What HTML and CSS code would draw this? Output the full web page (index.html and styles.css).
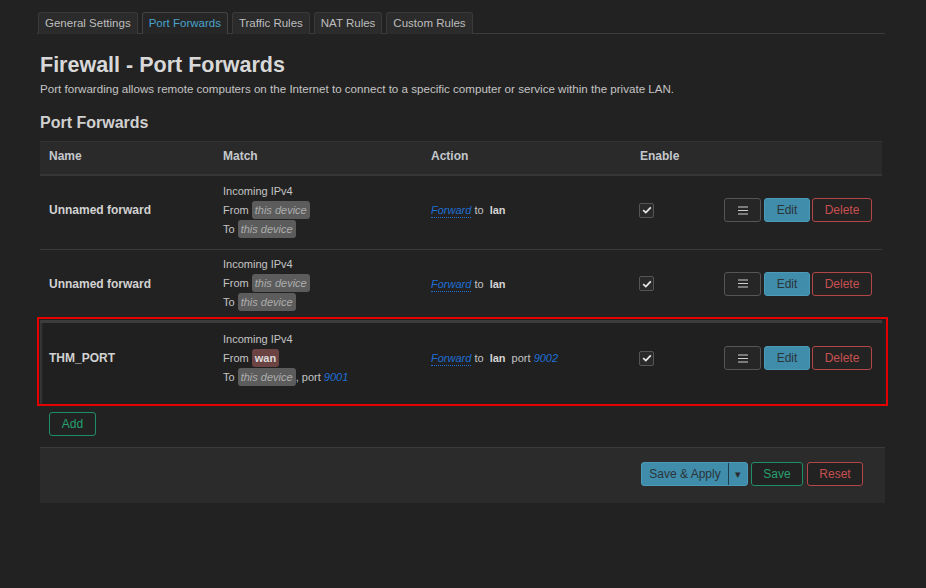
FILE: index.html
```html
<!DOCTYPE html>
<html>
<head>
<meta charset="utf-8">
<link rel="stylesheet" href="styles.css">
</head>
<body>
<div class="page">
  <ul class="tabs">
    <li class="tab">General Settings</li>
    <li class="tab active">Port Forwards</li>
    <li class="tab">Traffic Rules</li>
    <li class="tab">NAT Rules</li>
    <li class="tab">Custom Rules</li>
  </ul>

  <h2 class="title">Firewall - Port Forwards</h2>
  <p class="desc">Port forwarding allows remote computers on the Internet to connect to a specific computer or service within the private LAN.</p>

  <h3 class="section">Port Forwards</h3>

  <div class="table">
    <div class="row head">
      <div class="cell">Name</div>
      <div class="cell">Match</div>
      <div class="cell">Action</div>
      <div class="cell">Enable</div>
      <div class="cell"></div>
    </div>

    <div class="row first">
      <div class="cell name">Unnamed forward</div>
      <div class="cell match">
        <div>Incoming IPv4</div>
        <div>From <span class="badge">this device</span></div>
        <div>To <span class="badge">this device</span></div>
      </div>
      <div class="cell action"><span class="link">Forward</span> to <b>lan</b></div>
      <div class="cell"><span class="check"><svg width="10" height="8" viewBox="0 0 10 8"><path d="M1.2 4.2 L3.8 6.6 L8.8 1.4" fill="none" stroke="#e8e8e8" stroke-width="1.8"/></svg></span></div>
      <div class="cell btns">
        <span class="btn menu"><svg width="10" height="9" viewBox="0 0 10 9"><path d="M0 1h10M0 4.5h10M0 8h10" stroke="#cfcfcf" stroke-width="1.2"/></svg></span>
        <span class="btn edit">Edit</span>
        <span class="btn del">Delete</span>
      </div>
    </div>

    <div class="row second">
      <div class="cell name">Unnamed forward</div>
      <div class="cell match">
        <div>Incoming IPv4</div>
        <div>From <span class="badge">this device</span></div>
        <div>To <span class="badge">this device</span></div>
      </div>
      <div class="cell action"><span class="link">Forward</span> to <b>lan</b></div>
      <div class="cell"><span class="check"><svg width="10" height="8" viewBox="0 0 10 8"><path d="M1.2 4.2 L3.8 6.6 L8.8 1.4" fill="none" stroke="#e8e8e8" stroke-width="1.8"/></svg></span></div>
      <div class="cell btns">
        <span class="btn menu"><svg width="10" height="9" viewBox="0 0 10 9"><path d="M0 1h10M0 4.5h10M0 8h10" stroke="#cfcfcf" stroke-width="1.2"/></svg></span>
        <span class="btn edit">Edit</span>
        <span class="btn del">Delete</span>
      </div>
    </div>

    <div class="row marked">
      <div class="cell name">THM_PORT</div>
      <div class="cell match">
        <div>Incoming IPv4</div>
        <div>From <span class="badge wan">wan</span></div>
        <div>To <span class="badge">this device</span>, port <span class="num">9001</span></div>
      </div>
      <div class="cell action"><span class="link">Forward</span> to <b>lan</b> port <span class="num">9002</span></div>
      <div class="cell"><span class="check"><svg width="10" height="8" viewBox="0 0 10 8"><path d="M1.2 4.2 L3.8 6.6 L8.8 1.4" fill="none" stroke="#e8e8e8" stroke-width="1.8"/></svg></span></div>
      <div class="cell btns">
        <span class="btn menu"><svg width="10" height="9" viewBox="0 0 10 9"><path d="M0 1h10M0 4.5h10M0 8h10" stroke="#cfcfcf" stroke-width="1.2"/></svg></span>
        <span class="btn edit">Edit</span>
        <span class="btn del">Delete</span>
      </div>
    </div>
  </div>

  <div class="addrow"><span class="btn add">Add</span></div>

  <div class="footer">
    <span class="btn apply"><span class="apply-main">Save &amp; Apply</span><span class="apply-drop">▾</span></span>
    <span class="btn save">Save</span>
    <span class="btn reset">Reset</span>
  </div>
</div>
</body>
</html>
```

FILE: styles.css
```css
* { box-sizing: border-box; }

html, body {
  margin: 0;
  padding: 0;
  background: #222222;
  height: 100%;
}

body {
  font-family: "Liberation Sans", Arial, sans-serif;
  font-size: 12px;
  color: #c8c8c8;
}

.page {
  width: 926px;
  padding: 12px 41px 0 40px;
}

.tabs {
  list-style: none;
  margin: 0 0 0 -3px;
  padding: 0 0 0 1px;
  display: flex;
  gap: 4px;
  border-bottom: 1px solid #3c3c3c;
  height: 22px;
}

.tab {
  height: 22px;
  line-height: 20px;
  padding: 0 6px;
  background: #2b2b2b;
  border: 1px solid #3a3a3a;
  border-bottom: none;
  border-radius: 3px 3px 0 0;
  color: #bdbdbd;
  font-size: 11.5px;
}

.tab.active {
  color: #4aa3cc;
  background: #262626;
  border-color: #444;
}

.title {
  margin: 18px 0 0 0;
  font-size: 21.5px;
  line-height: 26px;
  font-weight: bold;
  color: #d8d8d8;
}

.desc {
  margin: 3px 0 0 0;
  font-size: 11.6px;
  line-height: 16px;
  color: #c4c4c4;
}

.section {
  margin: 16px 0 0 0;
  font-size: 16px;
  line-height: 20px;
  font-weight: bold;
  color: #d0d0d0;
}

.table {
  margin: 8px 3px 0 0;
}

.row {
  display: grid;
  grid-template-columns: 174px 208px 209px 84px 1fr;
  align-items: center;
  border-bottom: 1px solid #3a3a3a;
  min-height: 74px;
}

.row.first {
  padding-bottom: 5px;
}

.row.second {
  min-height: 70px;
  padding-bottom: 3px;
  border-bottom: none;
}

.row.head {
  min-height: 35px;
  background: #2a2a2a;
  border-top: 1px solid #333;
  border-bottom: 2px solid #363636;
  font-weight: bold;
  color: #c4c8cc;
  padding-bottom: 4px;
}

.cell {
  padding: 0 9px;
}

.name {
  font-weight: bold;
  color: #d2d2d2;
}

.match {
  font-size: 11px;
  line-height: 19px;
  color: #c4c4c4;
}

.badge {
  display: inline-block;
  background: #5c5c5c;
  color: #adadad;
  font-style: italic;
  border-radius: 3px;
  padding: 0 3px;
  line-height: 18px;
}

.badge.wan {
  background: #6c4343;
  color: #dcdcdc;
  font-style: normal;
  font-weight: bold;
}

.action {
  font-size: 11px;
  color: #c4c4c4;
}

.action b {
  margin-left: 3px;
  margin-right: 3px;
  color: #d4d4d4;
}

.link {
  color: #1f6fd6;
  font-style: italic;
  border-bottom: 1px dotted #1f6fd6;
  padding-bottom: 1px;
}

.num {
  color: #1f6fd6;
  font-style: italic;
}

.check {
  display: inline-flex;
  width: 15px;
  height: 15px;
  border: 1px solid #555;
  border-radius: 2px;
  background: #2a2a2a;
  align-items: center;
  justify-content: center;
  vertical-align: middle;
  margin-left: -1px;
}

.btns {
  display: flex;
  justify-content: flex-end;
  gap: 2px;
  padding-right: 10px;
}

.btn {
  display: inline-flex;
  align-items: center;
  justify-content: center;
  height: 24px;
  border-radius: 3px;
  border: 1px solid #555;
  font-size: 12px;
  background: #232323;
}

.btn.menu {
  width: 37px;
  margin-right: 1px;
  background: #262626;
}

.btn.edit {
  width: 46px;
  background: #3f8dab;
  border-color: #4b9ab7;
  color: #2c3438;
}

.btn.del {
  width: 60px;
  border-color: #b34747;
  color: #c85050;
}

.row.marked {
  position: relative;
  min-height: 86px;
  padding-bottom: 13px;
  background: #202020;
  border-top: 3px solid #3c3c3c;
  box-shadow: inset 3px 0 2px -1px #383838;
  border-bottom: none;
}

.row.marked::after {
  content: "";
  position: absolute;
  left: -3px;
  right: -6px;
  top: -6px;
  bottom: 0;
  border: 2px solid #e40000;
  pointer-events: none;
}

.addrow {
  padding: 6px 0 0 9px;
  height: 31px;
}

.btn.add {
  width: 47px;
  height: 24px;
  border-color: #1f9066;
  color: #27a070;
  background: #222;
}

.footer {
  margin-top: 10px;
  height: 56px;
  background: #2b2b2b;
  border-top: 1px solid #3a3a3a;
  display: flex;
  align-items: center;
  justify-content: flex-end;
  gap: 3px;
  padding-right: 22px;
  padding-bottom: 3px;
}

.btn.apply {
  width: 107px;
  background: #3f8dab;
  border-color: #4b9ab7;
  color: #2c3438;
  padding: 0;
  overflow: hidden;
}

.apply-main {
  flex: 1;
  text-align: center;
  line-height: 22px;
  border-right: 1px solid #1f3f4c;
}

.apply-drop {
  width: 18px;
  text-align: center;
  font-size: 11px;
  color: #2a2a2a;
}

.btn.save {
  width: 52px;
  border-color: #1f9066;
  color: #27a070;
  background: #222;
}

.btn.reset {
  width: 56px;
  margin-left: 1px;
  border-color: #b34747;
  color: #c85050;
  background: #222;
}
```
